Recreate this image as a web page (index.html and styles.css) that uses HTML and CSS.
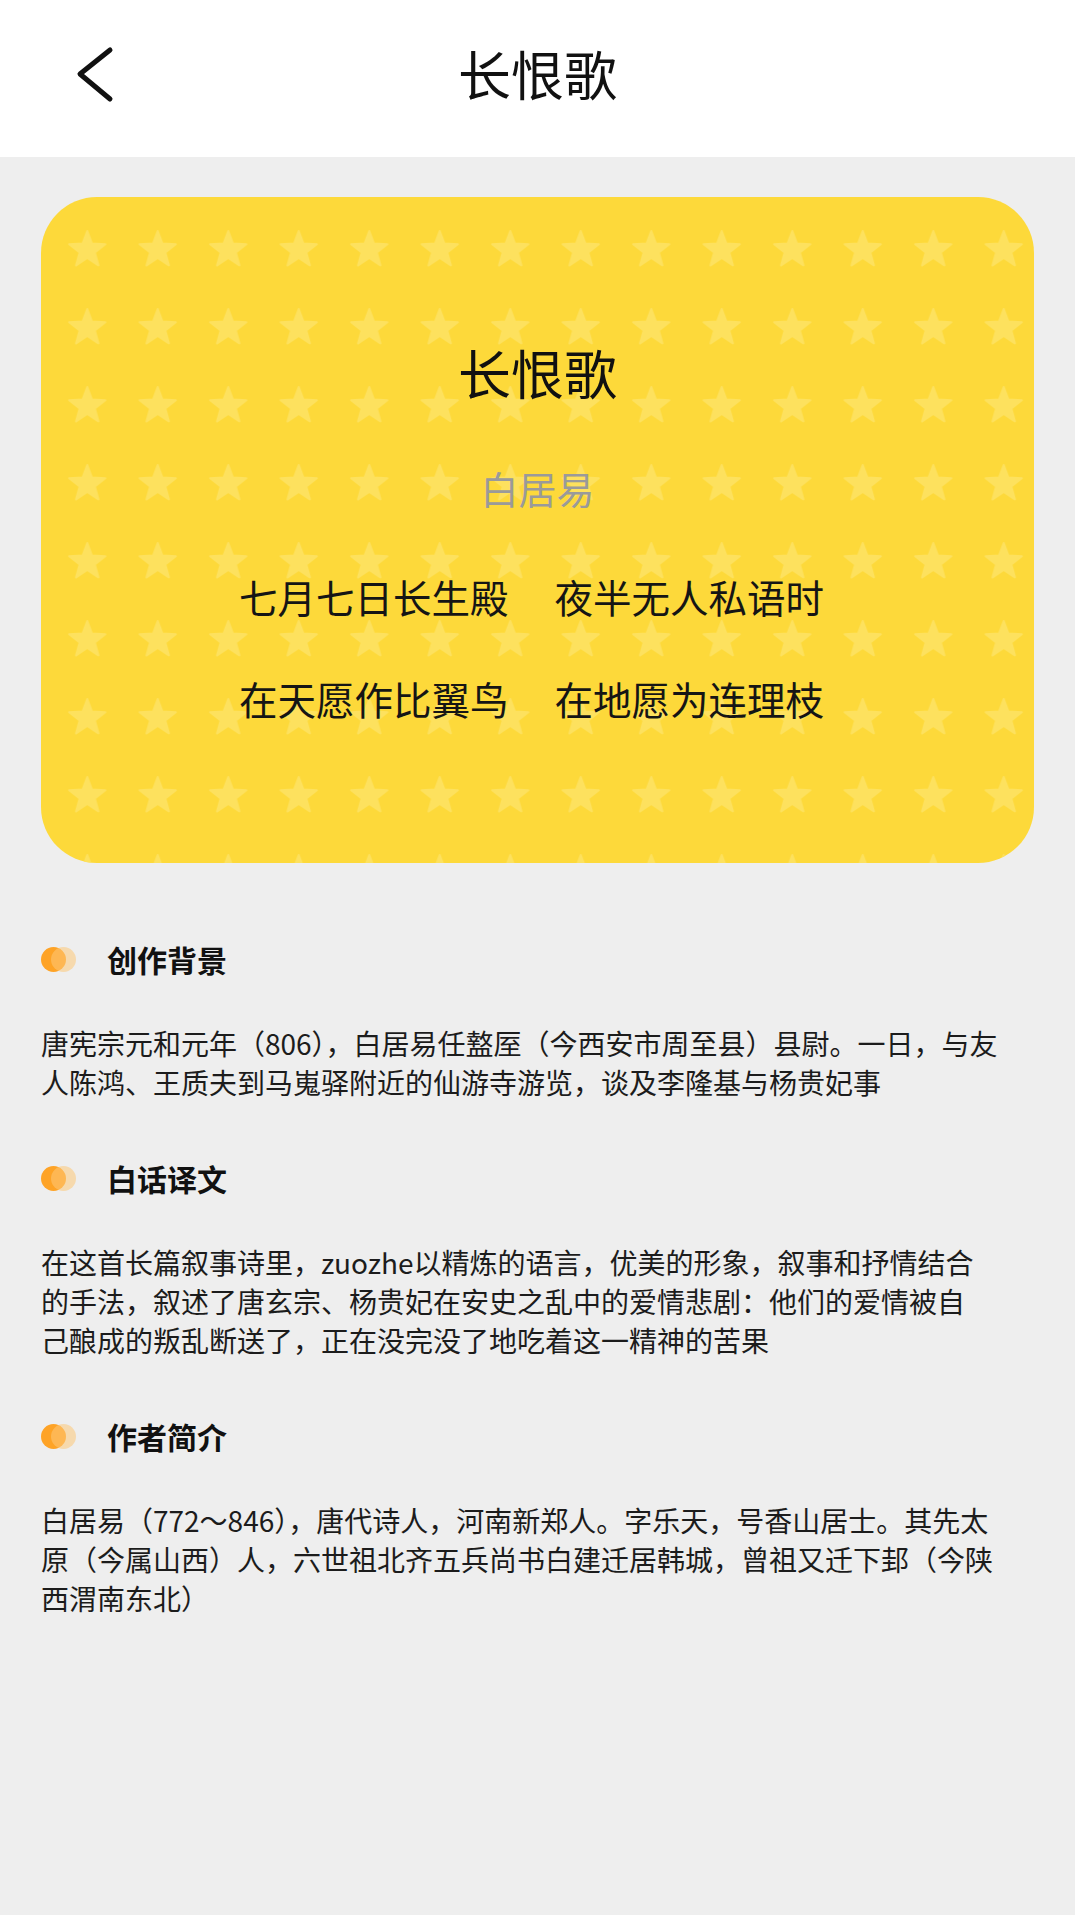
FILE: index.html
```html
<!DOCTYPE html>
<html lang="zh-CN">
<head>
<meta charset="utf-8">
<title>长恨歌</title>
<link rel="stylesheet" href="styles.css">
</head>
<body>
<header class="topbar">
  <span class="back">
    <svg width="44" height="60" viewBox="0 0 44 60"><path d="M38 6 L8 30 L38 55" fill="none" stroke="#111" stroke-width="5" stroke-linecap="round" stroke-linejoin="round"/></svg>
  </span>
  <h1 class="topbar-title">长恨歌</h1>
</header>

<main class="content">
  <section class="card">
    <svg class="stars" width="100%" height="100%" aria-hidden="true">
      <defs>
        <pattern id="starp" x="11" y="13" width="70.5" height="78" patternUnits="userSpaceOnUse">
          <path transform="translate(35.25 40)" d="M0,-19 L4.70,-6.47 L18.07,-5.87 L7.61,2.47 L11.17,15.37 L0,8 L-11.17,15.37 L-7.61,2.47 L-18.07,-5.87 L-4.70,-6.47 Z" fill="#fde15e" stroke="#fde15e" stroke-width="2" stroke-linejoin="round"/>
        </pattern>
      </defs>
      <rect width="100%" height="100%" fill="url(#starp)"/>
    </svg>
    <div class="card-body">
      <h2 class="poem-title">长恨歌</h2>
      <p class="poem-author">白居易</p>
      <p class="poem-line"><span>七月七日长生殿</span><span>夜半无人私语时</span></p>
      <p class="poem-line"><span>在天愿作比翼鸟</span><span>在地愿为连理枝</span></p>
    </div>
  </section>

  <section class="info info-first">
    <h3 class="info-head"><span class="dot"></span>创作背景</h3>
    <p class="info-text">唐宪宗元和元年（806），白居易任盩厔（今西安市周至县）县尉。一日，与友<br>人陈鸿、王质夫到马嵬驿附近的仙游寺游览，谈及李隆基与杨贵妃事</p>
  </section>

  <section class="info">
    <h3 class="info-head"><span class="dot"></span>白话译文</h3>
    <p class="info-text">在这首长篇叙事诗里，zuozhe以精炼的语言，优美的形象，叙事和抒情结合<br>的手法，叙述了唐玄宗、杨贵妃在安史之乱中的爱情悲剧：他们的爱情被自<br>己酿成的叛乱断送了，正在没完没了地吃着这一精神的苦果</p>
  </section>

  <section class="info">
    <h3 class="info-head"><span class="dot"></span>作者简介</h3>
    <p class="info-text">白居易（772～846），唐代诗人，河南新郑人。字乐天，号香山居士。其先太<br>原（今属山西）人，六世祖北齐五兵尚书白建迁居韩城，曾祖又迁下邽（今陕<br>西渭南东北）</p>
  </section>
</main>
</body>
</html>
```

FILE: styles.css
```css
* { box-sizing: border-box; }

html, body {
  margin: 0;
  padding: 0;
}

body {
  background: #eeeeee;
  font-family: "Noto Sans CJK SC", "Noto Sans", sans-serif;
  color: #1a1a1a;
  min-height: 1915px;
}

.topbar {
  height: 157px;
  background: #ffffff;
  display: flex;
  align-items: center;
  justify-content: center;
  position: relative;
}

.back {
  position: absolute;
  left: 72px;
  top: 44px;
  width: 44px;
  height: 60px;
  display: block;
}

.back svg { display: block; }

.topbar-title {
  margin: 0;
  font-size: 53px;
  font-weight: 400;
  line-height: 60px;
  color: #111;
  margin-top: -12px;
}

.content {
  padding: 40px 41px 0 41px;
}

.card {
  position: relative;
  height: 666px;
  background: #fdd93a;
  border-radius: 56px;
  overflow: hidden;
}

.stars {
  position: absolute;
  left: 0;
  top: 0;
  width: 100%;
  height: 100%;
  display: block;
}

.card-body {
  position: relative;
  padding-top: 145px;
  display: flex;
  flex-direction: column;
  align-items: center;
}

.poem-title {
  margin: 0;
  font-size: 53px;
  font-weight: 400;
  line-height: 60px;
  color: #111;
}

.poem-author {
  margin: 61px 0 0 0;
  font-size: 38px;
  line-height: 50px;
  color: #9a9a9a;
}

.poem-line {
  margin: 58px 12px 0 0;
  font-size: 38.5px;
  line-height: 50px;
  color: #151515;
  display: flex;
  gap: 46px;
}

.poem-line + .poem-line {
  margin-top: 52px;
}

.info-head {
  margin: 0;
  display: flex;
  align-items: center;
  font-size: 30px;
  font-weight: 700;
  line-height: 40px;
  height: 40px;
  color: #111;
}

.info-first .info-head { margin-top: 76px; }

.dot {
  position: relative;
  width: 25px;
  height: 25px;
  border-radius: 50%;
  background: #fea326;
  margin-right: 41px;
  flex: none;
  z-index: 1;
}

.dot::after {
  content: "";
  position: absolute;
  left: 10px;
  top: 0;
  width: 25px;
  height: 25px;
  border-radius: 50%;
  background: rgba(253, 200, 120, 0.55);
  z-index: -1;
}

.info-text {
  margin: 45px 0 56px 0;
  font-size: 28px;
  line-height: 39px;
  color: #1c1c1c;
}
```
